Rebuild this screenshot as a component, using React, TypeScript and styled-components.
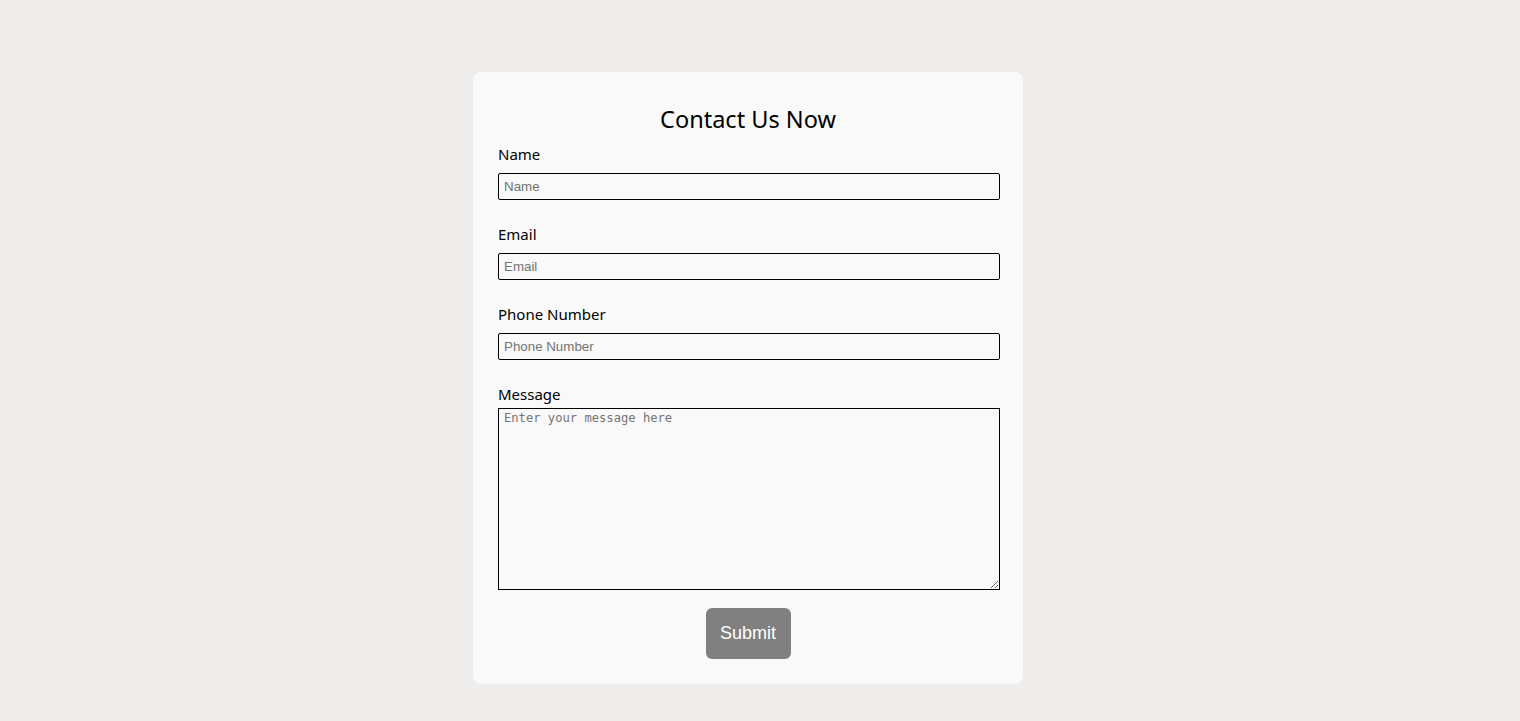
import * as React from 'react';
import styled, { createGlobalStyle } from 'styled-components';

const GlobalStyle = createGlobalStyle`
  html, body {
    margin: 0;
    padding: 0;
    background-color: #eeedeb;
  }
`;

const fields = [
  { id: 'name', label: 'Name', type: 'text' },
  { id: 'email', label: 'Email', type: 'email' },
  { id: 'phone', label: 'Phone Number', type: 'tel' },
];

export const App: React.FC = () => {
  return (
    <>
      <GlobalStyle />
      <Page>
        <FormCard>
          <Title>Contact Us Now</Title>
          {fields.map((f) => (
            <FieldGroup key={f.id}>
              <Label htmlFor={f.id}>{f.label}</Label>
              <Input id={f.id} type={f.type} placeholder={f.label} />
            </FieldGroup>
          ))}
          <Label htmlFor="message">Message</Label>
          <MessageArea id="message" placeholder="Enter your message here" />
          <SubmitButton type="button">Submit</SubmitButton>
        </FormCard>
      </Page>
    </>
  );
};

export default App;

const Page = styled.div`
  display: flex;
  justify-content: center;
  align-items: flex-start;
  padding-top: 72px;
  padding-right: 24px;
  min-height: 721px;
  box-sizing: border-box;
`;

const FormCard = styled.form`
  display: flex;
  flex-direction: column;
  width: 550px;
  box-sizing: border-box;
  padding: 30px 25px 25px;
  background-color: #f9f9f9;
  border-radius: 8px;
  font-family: "Noto Sans", sans-serif;
`;

const Title = styled.h2`
  margin: 0 0 7px;
  text-align: center;
  font-size: 23.5px;
  font-weight: 400;
  line-height: 34px;
  color: #000;
`;

const FieldGroup = styled.div`
  display: flex;
  flex-direction: column;
  margin-bottom: 23px;
`;

const Label = styled.label`
  font-size: 15px;
  line-height: 22px;
  color: #000;
`;

const Input = styled.input`
  margin-top: 8px;
  width: calc(100% + 2px);
  height: 27px;
  box-sizing: border-box;
  padding: 0 5px;
  border: 1px solid #000;
  border-radius: 2px;
  background: transparent;
  font-family: "Liberation Sans", Arial, sans-serif;
  font-size: 13.33px;
  color: #000;

  &::placeholder {
    color: #757575;
  }
`;

const MessageArea = styled.textarea`
  margin-top: 3px;
  width: calc(100% + 2px);
  height: 182px;
  box-sizing: border-box;
  padding: 2px 5px;
  border: 1px solid #000;
  background: transparent;
  font-family: "DejaVu Sans Mono", monospace;
  font-size: 12.15px;
  color: #000;
  resize: both;

  &::placeholder {
    color: #757575;
  }
`;

const SubmitButton = styled.button`
  align-self: center;
  margin-top: 18px;
  width: 85px;
  height: 51px;
  border: none;
  border-radius: 6px;
  background-color: #808080;
  color: #fff;
  font-family: "Liberation Sans", Arial, sans-serif;
  font-size: 18px;
  cursor: pointer;
`;
